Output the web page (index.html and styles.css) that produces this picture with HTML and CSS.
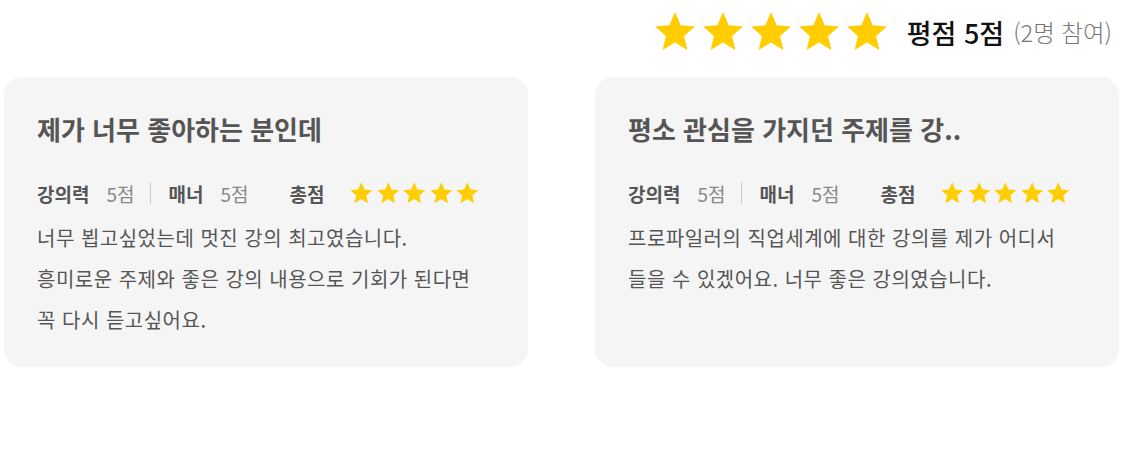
FILE: index.html
```html
<!DOCTYPE html>
<html lang="ko">
<head>
    <meta charset="UTF-8">
    <meta name="viewport" content="width=device-width, initial-scale=1.0">
    <title>강의 후기</title>
    <link rel="stylesheet" href="styles.css">
</head>
<body>

<div class="review-summary">
    <div class="stars stars-large">
        <svg viewBox="0 0 24 24"><path d="M12 17.27L18.18 21l-1.64-7.03L22 9.24l-7.19-.61L12 2 9.19 8.63 2 9.24l5.46 4.73L5.82 21z"/></svg>
        <svg viewBox="0 0 24 24"><path d="M12 17.27L18.18 21l-1.64-7.03L22 9.24l-7.19-.61L12 2 9.19 8.63 2 9.24l5.46 4.73L5.82 21z"/></svg>
        <svg viewBox="0 0 24 24"><path d="M12 17.27L18.18 21l-1.64-7.03L22 9.24l-7.19-.61L12 2 9.19 8.63 2 9.24l5.46 4.73L5.82 21z"/></svg>
        <svg viewBox="0 0 24 24"><path d="M12 17.27L18.18 21l-1.64-7.03L22 9.24l-7.19-.61L12 2 9.19 8.63 2 9.24l5.46 4.73L5.82 21z"/></svg>
        <svg viewBox="0 0 24 24"><path d="M12 17.27L18.18 21l-1.64-7.03L22 9.24l-7.19-.61L12 2 9.19 8.63 2 9.24l5.46 4.73L5.82 21z"/></svg>
    </div>
    <span class="score">평점 5점</span>
    <span class="count">(2명 참여)</span>
</div>

<div class="review-list">
    <div class="review-card">
        <h2 class="review-title">제가 너무 좋아하는 분인데</h2>
        <div class="review-meta">
            <span class="label">강의력</span>
            <span class="value">5점</span>
            <span class="divider"></span>
            <span class="label">매너</span>
            <span class="value">5점</span>
            <span class="label total">총점</span>
            <div class="stars stars-small">
                <svg viewBox="0 0 24 24"><path d="M12 17.27L18.18 21l-1.64-7.03L22 9.24l-7.19-.61L12 2 9.19 8.63 2 9.24l5.46 4.73L5.82 21z"/></svg>
                <svg viewBox="0 0 24 24"><path d="M12 17.27L18.18 21l-1.64-7.03L22 9.24l-7.19-.61L12 2 9.19 8.63 2 9.24l5.46 4.73L5.82 21z"/></svg>
                <svg viewBox="0 0 24 24"><path d="M12 17.27L18.18 21l-1.64-7.03L22 9.24l-7.19-.61L12 2 9.19 8.63 2 9.24l5.46 4.73L5.82 21z"/></svg>
                <svg viewBox="0 0 24 24"><path d="M12 17.27L18.18 21l-1.64-7.03L22 9.24l-7.19-.61L12 2 9.19 8.63 2 9.24l5.46 4.73L5.82 21z"/></svg>
                <svg viewBox="0 0 24 24"><path d="M12 17.27L18.18 21l-1.64-7.03L22 9.24l-7.19-.61L12 2 9.19 8.63 2 9.24l5.46 4.73L5.82 21z"/></svg>
            </div>
        </div>
        <p class="review-text">너무 뵙고싶었는데 멋진 강의 최고였습니다.<br>흥미로운 주제와 좋은 강의 내용으로 기회가 된다면<br>꼭 다시 듣고싶어요.</p>
    </div>

    <div class="review-card">
        <h2 class="review-title">평소 관심을 가지던 주제를 강..</h2>
        <div class="review-meta">
            <span class="label">강의력</span>
            <span class="value">5점</span>
            <span class="divider"></span>
            <span class="label">매너</span>
            <span class="value">5점</span>
            <span class="label total">총점</span>
            <div class="stars stars-small">
                <svg viewBox="0 0 24 24"><path d="M12 17.27L18.18 21l-1.64-7.03L22 9.24l-7.19-.61L12 2 9.19 8.63 2 9.24l5.46 4.73L5.82 21z"/></svg>
                <svg viewBox="0 0 24 24"><path d="M12 17.27L18.18 21l-1.64-7.03L22 9.24l-7.19-.61L12 2 9.19 8.63 2 9.24l5.46 4.73L5.82 21z"/></svg>
                <svg viewBox="0 0 24 24"><path d="M12 17.27L18.18 21l-1.64-7.03L22 9.24l-7.19-.61L12 2 9.19 8.63 2 9.24l5.46 4.73L5.82 21z"/></svg>
                <svg viewBox="0 0 24 24"><path d="M12 17.27L18.18 21l-1.64-7.03L22 9.24l-7.19-.61L12 2 9.19 8.63 2 9.24l5.46 4.73L5.82 21z"/></svg>
                <svg viewBox="0 0 24 24"><path d="M12 17.27L18.18 21l-1.64-7.03L22 9.24l-7.19-.61L12 2 9.19 8.63 2 9.24l5.46 4.73L5.82 21z"/></svg>
            </div>
        </div>
        <p class="review-text">프로파일러의 직업세계에 대한 강의를 제가 어디서 들을 수 있겠어요. 너무 좋은 강의였습니다.</p>
    </div>
</div>

</body>
</html>
```

FILE: styles.css
```css
body {
    font-family: "Noto Sans CJK KR", "Noto Sans", sans-serif;
    margin: 0;
    padding: 0;
    background-color: white;
    color: #555;
}
.review-summary {
    display: flex;
    justify-content: flex-end;
    align-items: center;
    padding: 8px 12px 0 0;
    height: 48px;
}
.stars {
    display: flex;
}
.stars svg {
    fill: #ffcd00;
}
.stars-large svg {
    width: 48px;
    height: 48px;
}
.score {
    margin-left: 16px;
    font-size: 27px;
    font-weight: 500;
    color: #111;
}
.count {
    margin-left: 9px;
    font-size: 23.5px;
    font-weight: 300;
    color: #777;
}
.review-list {
    display: flex;
    justify-content: space-between;
    padding: 21px 5px 0 4px;
}
.review-card {
    width: 524px;
    height: 290px;
    box-sizing: border-box;
    padding: 32px 33px;
    background-color: #f5f5f5;
    border-radius: 18px;
}
.review-title {
    margin: 0;
    font-size: 26px;
    font-weight: 600;
    line-height: 40px;
    color: #555;
}
.review-meta {
    display: flex;
    align-items: center;
    margin-top: 30px;
    height: 28px;
    font-size: 19px;
}
.label {
    font-weight: 700;
    color: #555;
}
.value {
    margin-left: 17px;
    color: #888;
}
.divider {
    width: 1px;
    height: 22px;
    margin: 0 17px 0 16px;
    background-color: #ccc;
}
.total {
    margin-left: 41px;
}
.stars-small {
    margin-left: 24px;
}
.stars-small svg {
    width: 26.5px;
    height: 26.5px;
}
.review-text {
    margin: 10px 0 0;
    font-size: 20px;
    line-height: 41px;
    letter-spacing: 0.5px;
    word-break: keep-all;
    color: #555;
}
```
